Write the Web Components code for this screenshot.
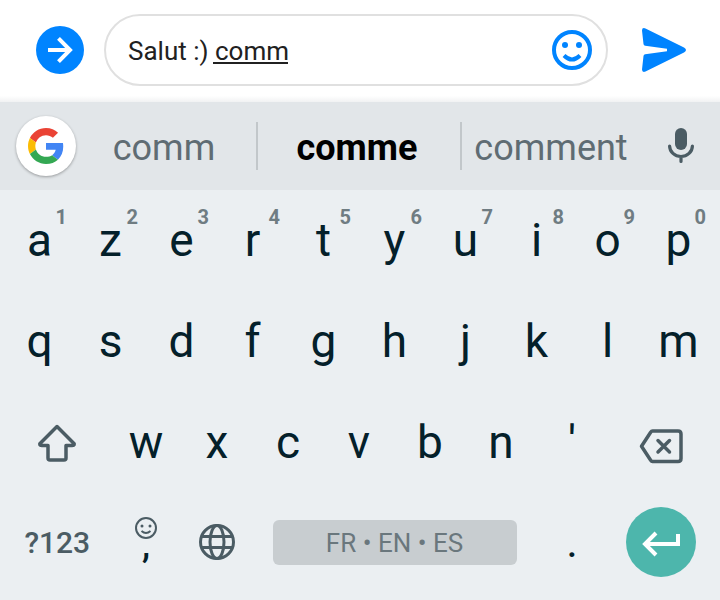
<!DOCTYPE html>
<html lang="fr">
<head>
<meta charset="utf-8">
<meta name="viewport" content="width=device-width, initial-scale=1">
<title>Message</title>
<style>
  body { margin: 0; background: #ebeff2; font-family: Roboto, "Liberation Sans", sans-serif; }
</style>
</head>
<body>
<chat-screen></chat-screen>
<script>
const BASE = `
  * { box-sizing: border-box; }
  button { appearance: none; border: 0; padding: 0; margin: 0; background: none; font: inherit; color: inherit; cursor: pointer; }
  svg { display: block; }`;

const define = (name, css, html) => customElements.define(name, class extends HTMLElement {
  constructor() {
    super();
    this.attachShadow({ mode: 'open' }).innerHTML =
      `<style>${BASE}${css}</style>${typeof html === 'function' ? html(this) : html}`;
  }
});

const ICONS = {
  forward: [48, 48, `<circle cx="24" cy="24" r="24" fill="#0084ff"/><path d="M12 24h22M22.500 12.300l11.500 11.700-11.500 11.700" fill="none" stroke="#fff" stroke-width="4"/>`],
  smile: [40, 40, `<circle cx="20" cy="20" r="18" fill="none" stroke="#0084ff" stroke-width="4"/><circle cx="13" cy="15" r="3" fill="#0084ff"/><circle cx="27" cy="15" r="3" fill="#0084ff"/><path d="M12 25.500q8 8 16 0" fill="none" stroke="#0084ff" stroke-width="4"/>`],
  send: [44, 44, `<path d="M0 2.500Q0-.8 3.500.4L42 19.500q4 2.500 0 5L3.500 43.600Q0 44.800 0 41.500L1.500 28q.2-1.500 1.700-1.700L25 23.200v-2.400L3.200 17.700Q1.700 17.500 1.500 16z" fill="#0084ff"/>`],
  google: [36, 36, `<g transform="scale(.75)"><path fill="#EA4335" d="M24 9.500c3.540 0 6.710 1.220 9.210 3.600l6.850-6.850C35.900 2.380 30.470 0 24 0 14.620 0 6.510 5.380 2.560 13.220l7.980 6.190C12.430 13.720 17.740 9.500 24 9.500z"/><path fill="#4285F4" d="M46.980 24.550c0-1.570-.15-3.090-.38-4.550H24v9.020h12.940c-.58 2.960-2.260 5.480-4.780 7.180l7.730 6c4.510-4.180 7.090-10.360 7.090-17.650z"/><path fill="#FBBC05" d="M10.530 28.590c-.48-1.450-.76-2.990-.76-4.590s.27-3.140.76-4.590l-7.980-6.190C.92 16.460 0 20.120 0 24c0 3.880.92 7.540 2.560 10.780l7.970-6.190z"/><path fill="#34A853" d="M24 48c6.480 0 11.930-2.130 15.890-5.810l-7.730-6c-2.150 1.450-4.920 2.300-8.160 2.300-6.260 0-11.570-4.220-13.470-9.910l-7.980 6.190C6.510 42.620 14.620 48 24 48z"/></g>`],
  mic: [26, 36, `<rect x="7" y="0" width="12" height="22" rx="6" fill="#4b5c64"/><path d="M1.600 18a11.400 10.500 0 0 0 22.800 0M13 28.500V33.500" fill="none" stroke="#4b5c64" stroke-width="3.200" stroke-linecap="round"/>`],
  shift: [40, 38, `<path d="M20 2.500L2.800 19.800Q2.500 21.500 5 21.500H11V34q0 2 2 2H27q2 0 2-2V21.500H35q2.500 0 2.200-1.700z" fill="none" stroke="#4b5c64" stroke-width="3.500" stroke-linejoin="round"/>`],
  backspace: [44, 42, `<path d="M13.500 9H39q3 0 3 3V36.500q0 3-3 3H13.500Q12.500 39.500 11.500 38L2.500 24.200 11.500 10.500q1-1.500 2-1.500z" fill="none" stroke="#4b5c64" stroke-width="3.500" stroke-linejoin="round"/><path d="M19 18.500l11.500 11.500M30.500 18.500l-11.500 11.500" fill="none" stroke="#4b5c64" stroke-width="3.500" stroke-linecap="round"/>`],
  face: [22, 22, `<circle cx="11" cy="11" r="10" fill="none" stroke="#4b5c64" stroke-width="2"/><circle cx="7" cy="9" r="1.500" fill="#4b5c64"/><circle cx="15" cy="9" r="1.500" fill="#4b5c64"/><path d="M6.500 14q4.500 4 9 0" fill="none" stroke="#4b5c64" stroke-width="2"/>`],
  globe: [36, 36, `<g fill="none" stroke="#4b5c64" stroke-width="3"><circle cx="18" cy="18" r="16.500"/><ellipse cx="18" cy="18" rx="7" ry="16.500"/><path d="M2 12.500h32M2 23.500h32"/></g>`],
  enter: [38, 26, `<path d="M36 3v10H3M14 2L3 13l11 11" fill="none" stroke="#fff" stroke-width="4"/>`]
};
define('ui-icon', `:host { display: block; flex: none; }`, el => {
  const [w, h, body] = ICONS[el.getAttribute('name')];
  return `<svg width="${w}" height="${h}" viewBox="0 0 ${w} ${h}" aria-hidden="true">${body}</svg>`;
});

define('message-field', `
  :host { display: block; flex: 1; min-width: 0; }
  .field { position: relative; display: flex; align-items: center; height: 72px; padding: 0 14px 0 22px;
    border: 2px solid #e0e0e0; border-radius: 36px; background: #fff; }
  input { flex: 1; min-width: 0; height: 40px; border: 0; outline: 0; padding: 2px 0 0; background: none;
    font: 26px/38px Roboto, "Liberation Sans", sans-serif; color: #212121; }
  .composing { position: absolute; left: 107px; top: 46px; width: 75px; height: 2px; background: #212121; }
`, `<div class="field"><input type="text" aria-label="Message" value="Salut :) comm" spellcheck="false">
  <span class="composing"></span>
  <button type="button" aria-label="Emoji"><ui-icon name="smile"></ui-icon></button></div>`);

define('message-bar', `
  :host { display: flex; align-items: center; height: 102px; padding: 0 34px 2px 36px;
    background: linear-gradient(#fff 94%, #f1f2f3); }
  message-field { margin: 0 34px 0 20px; }
`, `<button type="button" aria-label="Options"><ui-icon name="forward"></ui-icon></button>
  <message-field></message-field>
  <button type="button" aria-label="Envoyer"><ui-icon name="send"></ui-icon></button>`);

define('word-suggestion', `
  :host { display: block; min-width: 0; height: 48px; color: #5f6c73; }
  :host([divided]) { border-right: 2px solid #c2c7ca; }
  :host([best]) { color: #000; font-weight: 700; }
  button { width: 100%; height: 100%; padding: 4px 4px 0 0; font-size: 36px; line-height: 44px; }
`, `<button type="button"><slot></slot></button>`);

define('suggestion-bar', `
  :host { display: grid; grid-template-columns: 60px 182fr 204fr 182fr 74px; align-items: center;
    height: 88px; padding: 0 2px 0 16px; background: #e2e6e9; }
  .google { display: grid; place-items: center; width: 60px; height: 60px; border-radius: 50%;
    background: #fff; box-shadow: 0 1px 3px #0005; }
  .mic { display: grid; place-items: center; height: 60px; }
`, `<button class="google" type="button" aria-label="Google"><ui-icon name="google"></ui-icon></button>
  <word-suggestion divided>comm</word-suggestion>
  <word-suggestion divided best>comme</word-suggestion>
  <word-suggestion>comment</word-suggestion>
  <button class="mic" type="button" aria-label="Dictée"><ui-icon name="mic"></ui-icon></button>`);

define('letter-key', `
  :host { display: block; position: relative; grid-column: span 2; color: #04202a; }
  button { width: 100%; height: 100%; padding-bottom: 2px; font-size: 46px; line-height: 56px; }
  :host([small]) button { padding: 6px 0 0; font-size: 36px; font-weight: 500; }
  slot[name=alt] { position: absolute; right: 8px; top: 15px; font: 700 20px/24px Roboto, "Liberation Sans", sans-serif; color: #6f7c82; pointer-events: none; display: block; }
`, `<button type="button"><slot></slot></button><slot name="alt"></slot>`);

define('action-key', `
  :host { display: block; grid-column: span 3; color: #4b5c64; }
  :host([narrow]) { grid-column: span 2; }
  button { display: flex; align-items: center; justify-content: center; width: 100%; height: 100%; font-size: 30px; font-weight: 500; }
  :host([round]) button { width: 70px; height: 70px; margin: 14px auto; border-radius: 50%; background: #4db6ac; padding-top: 4px; }
`, el => `<button type="button" aria-label="${el.getAttribute('label')}"><slot></slot></button>`);

define('comma-key', `
  :host { display: block; grid-column: span 2; color: #04202a; }
  button { display: flex; flex-direction: column; align-items: center; width: 100%; height: 100%; padding-top: 24px; font-size: 36px; font-weight: 500; line-height: 12px; }
`, `<button type="button"><ui-icon name="face"></ui-icon><span>,</span></button>`);

define('space-key', `
  :host { display: flex; align-items: center; grid-column: span 8; padding: 0 20px; }
  button { width: 100%; height: 45px; padding-top: 2px; border-radius: 6px; background: #c8cdd0; color: #6a777d; font-size: 26px; }
`, `<button type="button"><slot></slot></button>`);

const letter = (ch, alt) => `<letter-key>${ch}${alt ? `<span slot="alt">${alt}</span>` : ''}</letter-key>`;
define('azerty-keyboard', `
  :host { display: grid; grid-template-columns: repeat(20, minmax(0, 1fr)); grid-template-rows: repeat(3, 101px) 98px;
    padding: 0 6px 9px 4px; background: #ebeff2; }
`, [...'azertyuiop'].map((c, i) => letter(c, String((i + 1) % 10))).join('')
  + [...'qsdfghjklm'].map(c => letter(c)).join('')
  + `<action-key label="Majuscule"><ui-icon name="shift"></ui-icon></action-key>`
  + [..."wxcvbn'"].map(c => letter(c)).join('')
  + `<action-key label="Effacer"><ui-icon name="backspace"></ui-icon></action-key>
  <action-key label="?123">?123</action-key>
  <comma-key></comma-key>
  <action-key narrow label="Langue"><ui-icon name="globe"></ui-icon></action-key>
  <space-key>FR • EN • ES</space-key>
  <letter-key small>.</letter-key>
  <action-key round label="Entrée"><ui-icon name="enter"></ui-icon></action-key>`);

define('chat-screen', `:host { display: block; }`,
  `<message-bar></message-bar><suggestion-bar></suggestion-bar><azerty-keyboard></azerty-keyboard>`);
</script>
</body>
</html>
